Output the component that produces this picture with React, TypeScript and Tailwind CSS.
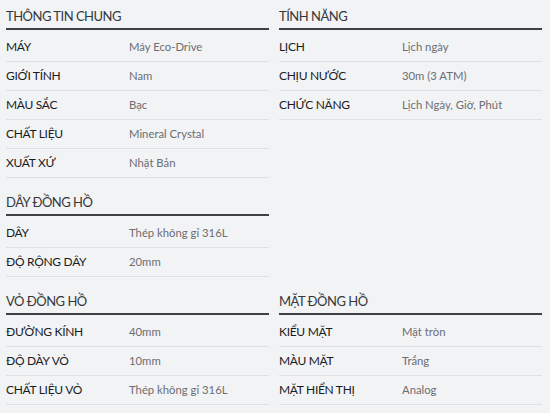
import React from "react";

type Row = [string, string];

const sections: Record<string, { title: string; rows: Row[] }> = {
  chung: {
    title: "THÔNG TIN CHUNG",
    rows: [
      ["MÁY", "Máy Eco-Drive"],
      ["GIỚI TÍNH", "Nam"],
      ["MÀU SẮC", "Bạc"],
      ["CHẤT LIỆU", "Mineral Crystal"],
      ["XUẤT XỨ", "Nhật Bản"],
    ],
  },
  day: {
    title: "DÂY ĐỒNG HỒ",
    rows: [
      ["DÂY", "Thép không gỉ 316L"],
      ["ĐỘ RỘNG DÂY", "20mm"],
    ],
  },
  tinhNang: {
    title: "TÍNH NĂNG",
    rows: [
      ["LỊCH", "Lịch ngày"],
      ["CHỊU NƯỚC", "30m (3 ATM)"],
      ["CHỨC NĂNG", "Lịch Ngày, Giờ, Phút"],
    ],
  },
  vo: {
    title: "VỎ ĐỒNG HỒ",
    rows: [
      ["ĐƯỜNG KÍNH", "40mm"],
      ["ĐỘ DÀY VỎ", "10mm"],
      ["CHẤT LIỆU VỎ", "Thép không gỉ 316L"],
    ],
  },
  mat: {
    title: "MẶT ĐỒNG HỒ",
    rows: [
      ["KIỂU MẶT", "Mặt tròn"],
      ["MÀU MẶT", "Trắng"],
      ["MẶT HIỂN THỊ", "Analog"],
    ],
  },
};

const Section = ({ title, rows, className = "" }: { title: string; rows: Row[]; className?: string }) => (
  <div className={className}>
    <h3 className="text-[13px] tracking-[-0.5px] leading-[20px] text-[#35383b] pb-[2px] border-b-2 border-[#3d4247] mb-[3px]">
      {title}
    </h3>
    {rows.map(([label, value]) => (
      <div key={label} className="flex items-center h-[29px] border-b border-[#dfe0e2]">
        <span className="w-[123px] shrink-0 text-[12px] tracking-[-0.3px] text-[#1a1c1f]">{label}</span>
        <span className="text-[11.3px] text-[#6b6e72]">{value}</span>
      </div>
    ))}
  </div>
);

export default function App() {
  return (
    <div
      className="w-[550px] h-[413px] bg-[#f2f3f5] pl-[6px] pt-[6px] overflow-hidden"
      style={{ fontFamily: "Lato, 'Open Sans', sans-serif" }}
    >
      <div className="grid grid-cols-[263px_263px] gap-x-[10px]">
        {/* Left top */}
        <div>
          <Section {...sections.chung} />
          <Section {...sections.day} className="mt-[14px]" />
        </div>
        {/* Right top */}
        <div>
          <Section {...sections.tinhNang} />
        </div>
        <Section {...sections.vo} className="mt-[14px]" />
        <Section {...sections.mat} className="mt-[14px]" />
      </div>
    </div>
  );
}
